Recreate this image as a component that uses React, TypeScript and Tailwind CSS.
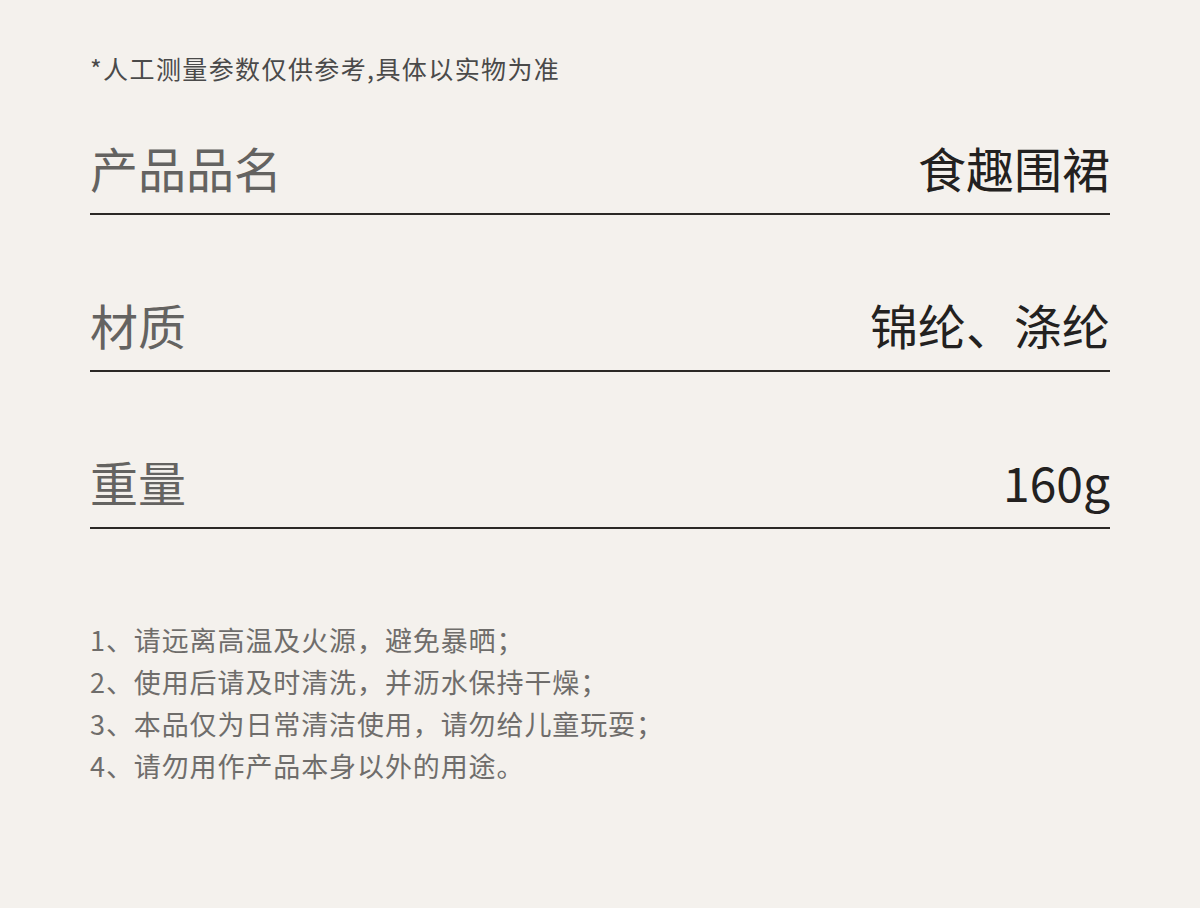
import React from "react";

const font = { fontFamily: '"Noto Sans CJK SC", "Noto Sans", sans-serif' };

const rows = [
  { label: "产品品名", value: "食趣围裙" },
  { label: "材质", value: "锦纶、涤纶" },
  { label: "重量", value: "160g" },
];

const notes = [
  "1、请远离高温及火源，避免暴晒；",
  "2、使用后请及时清洗，并沥水保持干燥；",
  "3、本品仅为日常清洁使用，请勿给儿童玩耍；",
  "4、请勿用作产品本身以外的用途。",
];

export default function App() {
  return (
    <div
      className="w-[1200px] h-[908px] bg-[#f4f1ed] overflow-hidden"
      style={font}
    >
      <div className="pl-[90px] w-[1110px]">
        <div className="pt-[52px] text-[25px] leading-[32px] tracking-[1.4px] text-[#4a4a4a]">
          *人工测量参数仅供参考,具体以实物为准
        </div>
        <div className="mt-[59px] flex flex-col gap-[85px]">
          {rows.map((r) => (
            <div
              key={r.label}
              className="flex items-center justify-between pb-[22px] border-b-2 border-[#2b2826]"
            >
              <span className="text-[48px] leading-[48px] text-[#646361]">
                {r.label}
              </span>
              <span className="text-[48px] leading-[48px] text-[#232120]">
                {r.value}
              </span>
            </div>
          ))}
        </div>
        <div className="mt-[90px] flex flex-col text-[27px] leading-[42px] tracking-[0.9px] text-[#6f6d6b]">
          {notes.map((n) => (
            <div key={n}>{n}</div>
          ))}
        </div>
      </div>
    </div>
  );
}
